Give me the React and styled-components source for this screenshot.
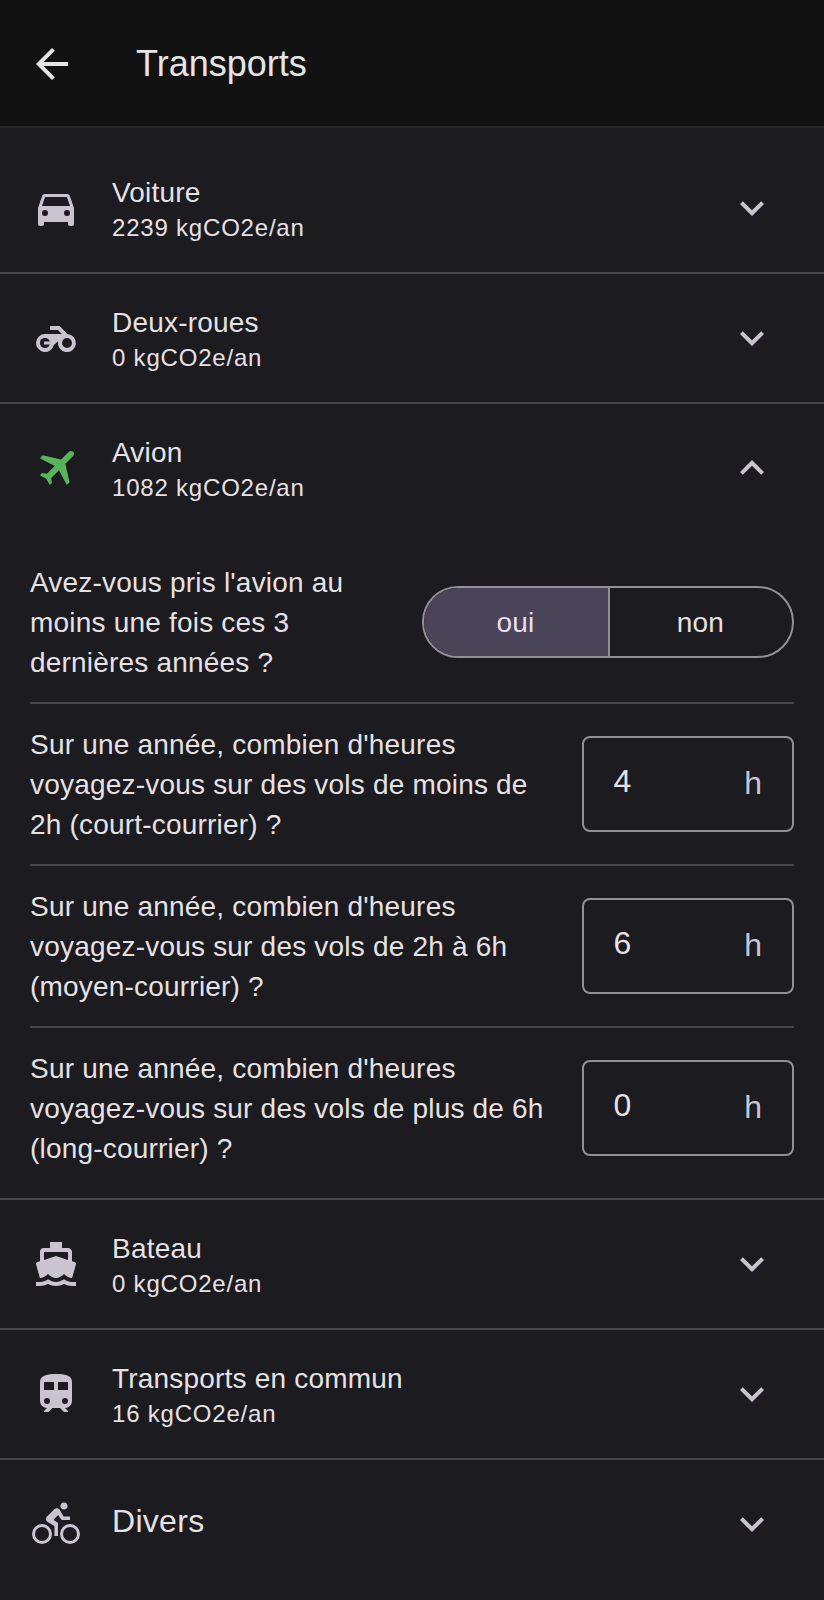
import React from "react";
import styled, { createGlobalStyle } from "styled-components";

const Global = createGlobalStyle`
  *, *::before, *::after { box-sizing: border-box; }
  body {
    margin: 0;
    background: #1c1b1f;
    color: #e6e1e5;
    font-family: "Liberation Sans", Arial, sans-serif;
  }
`;

const PATHS = {
  back: "M20 11H7.83l5.59-5.59L12 4l-8 8 8 8 1.41-1.41L7.83 13H20v-2z",
  down: "M7.41,8.58L12,13.17L16.59,8.58L18,10L12,16L6,10L7.41,8.58Z",
  up: "M7.41,15.41L12,10.83L16.59,15.41L18,14L12,8L6,14L7.41,15.41Z",
  car: "M5,11L6.5,6.5H17.5L19,11M17.5,16A1.5,1.5 0 0,1 16,14.5A1.5,1.5 0 0,1 17.5,13A1.5,1.5 0 0,1 19,14.5A1.5,1.5 0 0,1 17.5,16M6.5,16A1.5,1.5 0 0,1 5,14.5A1.5,1.5 0 0,1 6.5,13A1.5,1.5 0 0,1 8,14.5A1.5,1.5 0 0,1 6.5,16M18.92,6C18.72,5.42 18.16,5 17.5,5H6.5C5.84,5 5.28,5.42 5.08,6L3,12V20A1,1 0 0,0 4,21H5A1,1 0 0,0 6,20V19H18V20A1,1 0 0,0 19,21H20A1,1 0 0,0 21,20V12L18.92,6Z",
  motorbike: "M17.7 10.01L13.8 6H9V8H13L14.9 10H6.5A4.5 4.5 0 1 0 10.9 15.5L13.05 13.6A4.5 4.5 0 1 0 17.7 10.01ZM6.5 17A2.5 2.5 0 1 1 8.88 13.75H6V15.25H8.88A2.5 2.5 0 0 1 6.5 17ZM17.5 17A2.5 2.5 0 1 1 17.5 12A2.5 2.5 0 0 1 17.5 17Z",
  plane: "M20.56 3.91C21.15 4.5 21.15 5.45 20.56 6.03L16.67 9.92L18.79 19.11L17.38 20.53L13.5 13.1L9.6 17L9.96 19.47L8.89 20.53L7.13 17.35L3.94 15.58L5 14.5L7.5 14.87L11.37 11L3.94 7.09L5.36 5.68L14.55 7.8L18.44 3.91C19 3.33 20 3.33 20.56 3.91Z",
  ferry: "M6,6H18V9.96L12,8L6,9.96M3.94,19H4C5.6,19 7,18.12 8,17C9,18.12 10.4,19 12,19C13.6,19 15,18.12 16,17C17,18.12 18.4,19 20,19H20.05L21.95,12.31C22.03,12.06 22,11.78 21.89,11.54C21.76,11.3 21.55,11.12 21.29,11.04L20,10.62V6C20,4.89 19.1,4 18,4H15V1H9V4H6A2,2 0 0,0 4,6V10.62L2.71,11.04C2.45,11.12 2.24,11.3 2.11,11.54C2,11.78 1.97,12.06 2.05,12.31M20,21C18.61,21 17.22,20.53 16,19.67C13.56,21.38 10.44,21.38 8,19.67C6.78,20.53 5.39,21 4,21H2V23H4C5.37,23 6.74,22.65 8,22C10.5,23.3 13.5,23.3 16,22C17.26,22.65 18.62,23 20,23H22V21",
  train: "M12,2C8,2 4,2.5 4,6V15.5A3.5,3.5 0 0,0 7.5,19L6,20.5V21H8.23L10.23,19H14L16,21H18V20.5L16.5,19A3.5,3.5 0 0,0 20,15.5V6C20,2.5 16.42,2 12,2M7.5,17A1.5,1.5 0 0,1 6,15.5A1.5,1.5 0 0,1 7.5,14A1.5,1.5 0 0,1 9,15.5A1.5,1.5 0 0,1 7.5,17M11,10H6V6H11V10M13,10V6H18V10H13M16.5,17A1.5,1.5 0 0,1 15,15.5A1.5,1.5 0 0,1 16.5,14A1.5,1.5 0 0,1 18,15.5A1.5,1.5 0 0,1 16.5,17Z",
  bike: "M5,20.5A3.5,3.5 0 0,1 1.5,17A3.5,3.5 0 0,1 5,13.5A3.5,3.5 0 0,1 8.5,17A3.5,3.5 0 0,1 5,20.5M5,12A5,5 0 0,0 0,17A5,5 0 0,0 5,22A5,5 0 0,0 10,17A5,5 0 0,0 5,12M14.8,10H19V8.2H15.8L13.86,4.93C13.57,4.43 13,4.1 12.4,4.1C11.93,4.1 11.5,4.29 11.2,4.6L7.5,8.29C7.19,8.6 7,9 7,9.5C7,10.13 7.33,10.66 7.85,10.97L11.2,13V18H13V11.5L10.75,9.85L13.07,7.5M19,20.5A3.5,3.5 0 0,1 15.5,17A3.5,3.5 0 0,1 19,13.5A3.5,3.5 0 0,1 22.5,17A3.5,3.5 0 0,1 19,20.5M19,12A5,5 0 0,0 14,17A5,5 0 0,0 19,22A5,5 0 0,0 24,17A5,5 0 0,0 19,12M16,4.8C17,4.8 17.8,4 17.8,3C17.8,2 17,1.2 16,1.2C15,1.2 14.2,2 14.2,3C14.2,4 15,4.8 16,4.8Z",
};

const Svg = styled.svg`
  display: block;
  flex: none;
  width: 48px;
  height: 48px;
  fill: ${(p) => p.$color || "#cac4d0"};
`;

const Icon = ({ name, color }) => (
  <Svg viewBox="0 0 24 24" $color={color} aria-hidden="true">
    <path fillRule={name === "motorbike" ? "evenodd" : undefined} d={PATHS[name]} />
  </Svg>
);

const Screen = styled.div`
  height: 1600px;
  overflow: hidden;
`;

const Header = styled.header`
  display: flex;
  align-items: center;
  gap: 60px;
  height: 128px;
  padding: 0 28px;
  background: #121212;
  border-bottom: 2px solid #272729;
`;

const BackButton = styled.button`
  padding: 0;
  margin-top: 2px;
  border: 0;
  background: none;
`;

const Title = styled.h1`
  margin: 1px 0 0;
  font-size: 36px;
  font-weight: 400;
  line-height: 45px;
  color: #e5e5e7;
`;

const List = styled.main`
  padding-top: 16px;
`;

const Section = styled.section`
  border-bottom: 2px solid #49454f;
  &:last-child { border-bottom: 0; }
`;

const SectionHeader = styled.div`
  display: flex;
  align-items: center;
  height: 128px;
  padding: 0 48px 0 32px;
`;

const Labels = styled.div`
  flex: 1;
  margin-left: 32px;
`;

const Name = styled.div`
  padding-top: 1px;
  font-size: 28px;
  line-height: 39px;
  letter-spacing: 0.2px;
`;

const SoloName = styled.div`
  margin-top: -6px;
  font-size: 32px;
  line-height: 48px;
  letter-spacing: 0.3px;
`;

const Amount = styled.div`
  font-size: 24px;
  line-height: 32px;
  letter-spacing: 0.8px;
`;

const Questions = styled.div`
  padding: 10px 30px;
`;

const Question = styled.div`
  display: flex;
  align-items: center;
  height: ${(p) => (p.$last ? 160 : 162)}px;
  gap: 32px;
  border-bottom: ${(p) => (p.$last ? 0 : "2px solid #49454f")};
`;

const Prompt = styled.p`
  flex: 1;
  margin: 0;
  padding-top: 2px;
  font-size: 28px;
  line-height: 40px;
  letter-spacing: 0.2px;
`;

const Segmented = styled.div`
  display: flex;
  width: 372px;
  height: 72px;
  flex: none;
  border: 2px solid #938f99;
  border-radius: 36px;
  overflow: hidden;
`;

const Segment = styled.button`
  flex: none;
  width: 184px;
  padding: 2px 1px 0 0;
  border: 0;
  border-left: ${(p) => (p.$divided ? "2px solid #938f99" : 0)};
  background: ${(p) => (p.$active ? "#4a4458" : "transparent")};
  color: ${(p) => (p.$active ? "#e8def8" : "#e6e1e5")};
  font: inherit;
  font-size: 28px;
  letter-spacing: 0.2px;
`;

const Field = styled.label`
  display: flex;
  justify-content: space-between;
  width: 212px;
  height: 96px;
  flex: none;
  padding: 0 30px 0 29.5px;
  border: 2px solid #938f99;
  border-radius: 8px;
  font-size: 32px;
  line-height: 90px;
`;

const Value = styled.span`
  line-height: 86px;
`;

const Unit = styled.span`
  color: #cac4d0;
`;

const HourQuestion = ({ children, value, last }) => (
  <Question $last={last}>
    <Prompt>{children}</Prompt>
    <Field>
      <Value>{value}</Value>
      <Unit>h</Unit>
    </Field>
  </Question>
);

const Category = ({ icon, name, amount, open, children }) => (
  <Section>
    <SectionHeader>
      <Icon name={icon} color={open ? "#59b359" : undefined} />
      <Labels>
        {amount ? <Name>{name}</Name> : <SoloName>{name}</SoloName>}
        {amount && <Amount>{amount} kgCO2e/an</Amount>}
      </Labels>
      <Icon name={open ? "up" : "down"} />
    </SectionHeader>
    {children}
  </Section>
);

export default function App() {
  return (
    <Screen>
      <Global />
      <Header>
        <BackButton aria-label="Retour">
          <Icon name="back" color="#e5e5e7" />
        </BackButton>
        <Title>Transports</Title>
      </Header>
      <List>
        <Category icon="car" name="Voiture" amount="2239" />
        <Category icon="motorbike" name="Deux-roues" amount="0" />
        <Category icon="plane" name="Avion" amount="1082" open>
          <Questions>
            <Question>
              <Prompt>
                Avez-vous pris l'avion au
                <br />
                moins une fois ces 3
                <br />
                dernières années ?
              </Prompt>
              <Segmented>
                <Segment $active>oui</Segment>
                <Segment $divided>non</Segment>
              </Segmented>
            </Question>
            <HourQuestion value="4">
              Sur une année, combien d'heures
              <br />
              voyagez-vous sur des vols de moins de
              <br />
              2h (court-courrier) ?
            </HourQuestion>
            <HourQuestion value="6">
              Sur une année, combien d'heures
              <br />
              voyagez-vous sur des vols de 2h à 6h
              <br />
              (moyen-courrier) ?
            </HourQuestion>
            <HourQuestion value="0" last>
              Sur une année, combien d'heures
              <br />
              voyagez-vous sur des vols de plus de 6h
              <br />
              (long-courrier) ?
            </HourQuestion>
          </Questions>
        </Category>
        <Category icon="ferry" name="Bateau" amount="0" />
        <Category icon="train" name="Transports en commun" amount="16" />
        <Category icon="bike" name="Divers" />
      </List>
    </Screen>
  );
}
